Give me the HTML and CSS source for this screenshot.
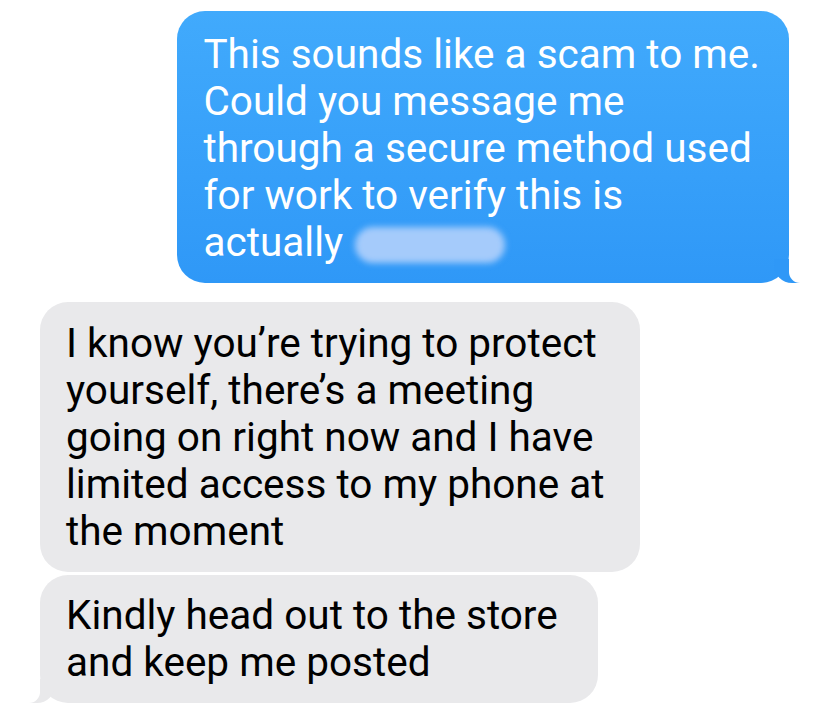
FILE: index.html
```html
<!DOCTYPE html>
<html>
<head>
    <title>Messages</title>
    <link rel="stylesheet" href="styles.css">
</head>
<body>
    <div class="thread">
        <div class="bubble sent">
            This sounds like a scam to me.<br>
            Could you message me<br>
            through a secure method used<br>
            for work to verify this is<br>
            actually <span class="redacted"></span>
        </div>

        <div class="bubble received first">
            I know you’re trying to protect<br>
            yourself, there’s a meeting<br>
            going on right now and I have<br>
            limited access to my phone at<br>
            the moment
        </div>

        <div class="bubble received last">
            Kindly head out to the store<br>
            and keep me posted
        </div>
    </div>
</body>
</html>
```

FILE: styles.css
```css
body {
    margin: 0;
    background: #fff;
    font-family: Roboto, "Liberation Sans", Arial, sans-serif;
}
.thread {
    display: flex;
    flex-direction: column;
    align-items: flex-start;
    padding: 11px 39px 0 40px;
}
.bubble {
    position: relative;
    font-size: 40.5px;
    line-height: 47px;
    border-radius: 28px;
    padding: 20px 33px 17px 26px;
    white-space: nowrap;
}

/* outgoing (blue) */
.sent {
    align-self: flex-end;
    padding-right: 29px;
    color: #fff;
    background: linear-gradient(#41aafc, #2f98f7);
}
.sent::before {
    content: "";
    position: absolute;
    bottom: 0;
    right: -11px;
    width: 26px;
    height: 24px;
    background: #2f98f7;
    border-bottom-left-radius: 18px;
}
.sent::after {
    content: "";
    position: absolute;
    bottom: 0;
    right: -14px;
    width: 14px;
    height: 24px;
    background: #fff;
    border-bottom-left-radius: 11px;
}
.redacted {
    display: inline-block;
    width: 150px;
    height: 36px;
    margin-left: 2px;
    vertical-align: -7px;
    background: #a5cbfb;
    border-radius: 18px;
    filter: blur(3px);
}

/* incoming (gray) */
.received {
    color: #000;
    background: #e9e9eb;
}
.received.first {
    margin-top: 19px;
    padding-top: 18px;
    padding-right: 36px;
}
.received.last {
    margin-top: 3px;
    padding-top: 17px;
    padding-right: 40px;
}
.received.last::before {
    content: "";
    position: absolute;
    bottom: 0;
    left: -11px;
    width: 26px;
    height: 24px;
    background: #e9e9eb;
    border-bottom-right-radius: 18px;
}
.received.last::after {
    content: "";
    position: absolute;
    bottom: 0;
    left: -14px;
    width: 14px;
    height: 24px;
    background: #fff;
    border-bottom-right-radius: 11px;
}
```
